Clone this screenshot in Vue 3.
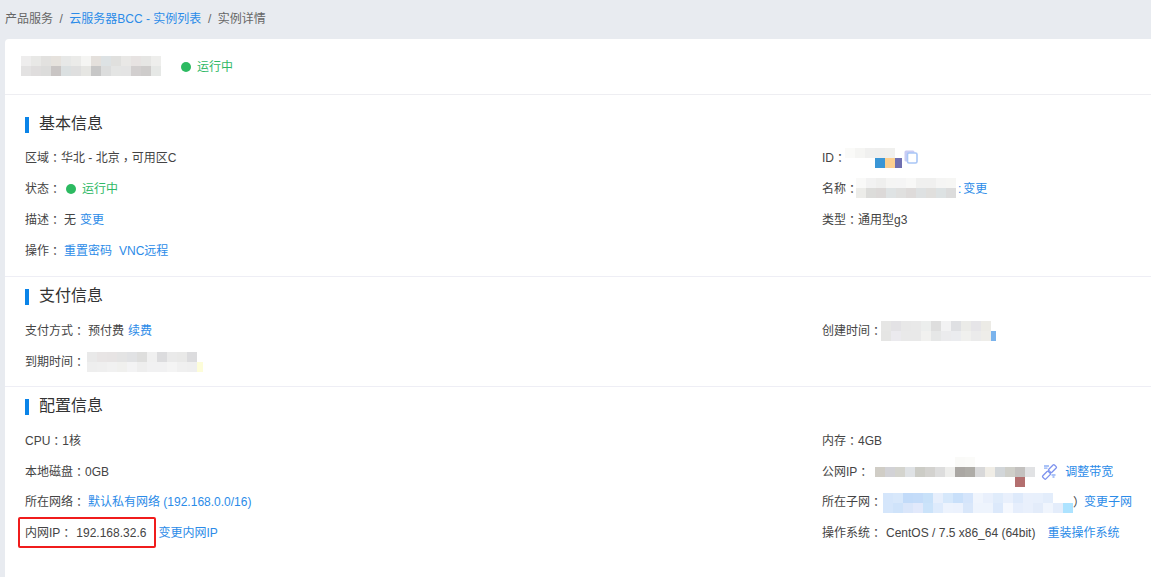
<script setup>
const hx = s => s.split(' ').map(c => {
  const [color, w] = c.split(':')
  return { background: '#' + color, width: (w || 10) + 'px' }
})

const blocks = {
  title: ['eeeded e8e8e6 e2e1df e6e2dd e7e8e7 ebebe9 f5f5f3 e4e0dc dde2e4 e0e0de e9e8e6 e7e3e2 e6e6e4 eeeeec',
          'e3e2e2 dfdddd dcdcdb c9c5c4 dbe0e1 dfdfdf e6e6e3 c7c7c7 dcdddd e4e5e4 e4e4e4 d2cfcf cecccb e6e8e6'],
  id: ['fafaf8 f5f5f3 f0f0ef efefee f0f0ee ffffff:7',
       'ffffff ffffff ffffff 3a96d6 fccf8f 6f6fb0:7'],
  name: ['f9f9f8 f2f2f2 efefee f5f5f4 f5f5f5 f8f8f7 f0f0ef f0f0ef f5f5f4 f6f6f4',
         'ecece9 dcdcda dcd9d8 dfe3e4 e0e0df dedbda dee1e2 e0dfdd dde2e3 dcdcdc'],
  created: ['e6e6e5 e3e2e5 e8e8e8 e9e9e9 eceeed dedede f2f2f3 dfe0e3 ebebe8 e6e5e8 ecebe6 ffffff:5',
            'e5e5e4 ebeaee e9e9e9 e9e9e9 f1f1ef e6e7e7 ebebed ebecef f0f0ee ebebeb eeede9 7ab3ec:5'],
  expire: ['e9e9e9 e8e5e5 e7e4e4 e4e4e4 e1e2e4 dededd f0f0f0 dcdcde eaeaea e9e9e8 dcdcde ffffff:6',
           'eeeeee efefef f1f1f1 f0f0ee f3f3f4 eeeeee f1f1f2 f1f1f2 f4f4f4 f0f0f0 efefef fdfdd9:6'],
  pub: ['ffffff ffffff ffffff ffffff ffffff ffffff ffffff ffffff fafaf8 fbfbf9 ffffff ffffff ffffff ffffff ffffff ffffff',
        'd0cdc6 d2d2d6 d4d4ce dfe2e5 ccccc6 d3d2cf dddddd eeeeec aaa7a3 aeaca7 d8d8d9 f0ede6 d2d6d9 cfcfc9 c3c1bf e1e2e4',
        'ffffff ffffff ffffff ffffff ffffff ffffff ffffff ffffff ffffff ffffff ffffff ffffff ffffff ffffff b36f6f ffffff'],
  subnet: ['d5e6fb d8e8fb c2dbf9 c4dcf9 c8e1f9 e7effc d6e8fb c9e0fa d5e5fb f0f5fd e9f0fc e0ecfb e9f0fc deeafb e9f0fc e8f0fc e3edfb ffffff ffffff',
           'd5e6fb cfe3fa dae6fa e2e9fb cbe3fa deebfc edf3fd ecf2fd d9e7fa eef4fd eef4fd dce9fb f5f8fe e6eefc e9f0fc e3ecfa f0f5fd e4edfb ade3ff']
}
const rowsOf = k => blocks[k].map(hx)

const sections = [
  {
    title: '基本信息', cls: 'sec-basic',
    rows: [
      [{ l: '区域', v: '华北 - 北京', gap: 0, tail: '可用区C' }, { l: 'ID', copy: true, b: 'id', bo: -1 }],
      [{ l: '状态', status: true }, { l: '名称', b: 'name', bo: -2, up: 2, faint: true, link: [{ t: '变更', cls: 'tight' }] }],
      [{ l: '描述', v: '无', gap: 3, link: [{ t: '变更' }] }, { l: '类型', v: '通用型g3', gap: 0 }],
      [{ l: '操作', gap: 3, link: [{ t: '重置密码', cls: 'near' }, { t: 'VNC远程' }] }, {}]
    ]
  },
  {
    title: '支付信息', cls: 'sec-pay',
    rows: [
      [{ l: '支付方式', v: '预付费', gap: 3, link: [{ t: '续费' }] }, { l: '创建时间', b: 'created', bo: -1 }],
      [{ l: '到期时间', b: 'expire', bo: 2 }, {}]
    ]
  },
  {
    title: '配置信息', cls: 'sec-config',
    rows: [
      [{ l: 'CPU', v: '1核', gap: 0 }, { l: '内存', v: '4GB', gap: 0 }],
      [{ l: '本地磁盘', v: '0GB', gap: 0 }, { l: '公网IP', b: 'pub', bo: 6, sat: true, satLink: '调整带宽' }],
      [{ l: '所在网络', gap: 3, link: [{ t: '默认私有网络 (192.168.0.0/16)', cls: 'near' }] }, { l: '所在子网', b: 'subnet', bo: 1, up: -2, paren: true, link: [{ t: '变更子网', cls: 'none' }] }],
      [{ l: '内网IP', v: '192.168.32.6', gap: 4, mark: true, link: [{ t: '变更内网IP', cls: 'far' }] }, { l: '操作系统', v: 'CentOS / 7.5 x86_64 (64bit)', gap: 4, link: [{ t: '重装操作系统', cls: 'far' }] }]
    ]
  }
]
</script>

<template>
  <div class="page">
    <nav class="crumbs">
      <span>产品服务</span><i>/</i>
      <a>云服务器BCC - 实例列表</a><i>/</i>
      <span>实例详情</span>
    </nav>

    <main class="card">
      <header class="head">
        <div class="mosaic">
          <div v-for="(r, i) in rowsOf('title')" :key="i" class="mrow">
            <b v-for="(c, j) in r" :key="j" :style="c"></b>
          </div>
        </div>
        <span class="status head-status"><em class="dot"></em>运行中</span>
      </header>

      <section v-for="s in sections" :key="s.title" class="sec" :class="s.cls">
        <h2 class="sec-title">{{ s.title }}</h2>
        <div v-for="(row, ri) in s.rows" :key="ri" class="row">
          <div v-for="(f, fi) in row" :key="fi" class="field" :class="{ right: fi === 1, marked: f.mark }">
            <template v-if="f.l">
              <span>{{ f.l }}</span><span class="colon">：</span>
              <span v-if="f.status" class="status"><em class="dot"></em>运行中</span>
              <div v-if="f.b" class="mosaic" :style="{ marginLeft: f.bo + 'px', marginBottom: (f.up || 0) + 'px' }">
                <div v-for="(r, i) in rowsOf(f.b)" :key="i" class="mrow">
                  <b v-for="(c, j) in r" :key="j" :style="c"></b>
                </div>
              </div>
              <svg v-if="f.copy" class="copy" width="14" height="14" viewBox="0 0 14 14">
                <rect x="0.5" y="0.5" width="10" height="11" rx="1.5" fill="#c9ccf4" />
                <rect x="3.5" y="3" width="9.5" height="10" rx="1.5" fill="#fff" stroke="#a9c6f6" stroke-width="1.6" />
              </svg>
              <span v-if="f.v" :style="{ marginLeft: f.gap + 'px' }">{{ f.v }}</span>
              <template v-if="f.tail"><span class="comma">，</span><span>{{ f.tail }}</span></template>
              <span v-if="f.faint" class="faint">:</span>
              <span v-if="f.paren" class="paren">）</span>
              <template v-if="f.sat">
                <svg class="sat" width="18" height="19" viewBox="0 0 18 19" fill="none" stroke="#7d92ee" stroke-width="1.3">
                  <rect x="7.5" y="4.4" width="8" height="4.4" rx="1" transform="rotate(-45 11.5 6.6)" />
                  <rect x="1.5" y="11" width="8" height="4.4" rx="1" transform="rotate(-45 5.5 13.2)" />
                  <path d="M8.8 9.2l-0.6 0.6M3 4h5M3 6.2h3.5M10.5 13h4M11.5 15h2" stroke="#8fb0f5" />
                </svg>
                <a class="sat-link">{{ f.satLink }}</a>
              </template>
              <a v-for="k in f.link" :key="k.t" class="link" :class="k.cls">{{ k.t }}</a>
              <span v-if="f.mark" class="redbox"></span>
            </template>
          </div>
        </div>
      </section>
    </main>
  </div>
</template>

<style>
html, body { margin: 0; background: #e8ebf0; }
</style>

<style scoped>
.page {
  height: 577px;
  overflow: hidden;
  background: #e8ebf0;
  color: #444;
  font: 12px/16px "Liberation Sans", "Noto Sans CJK SC", sans-serif;
}
.crumbs {
  height: 39px;
  box-sizing: border-box;
  padding: 11px 0 0 5px;
  display: flex;
  color: #666;
}
.crumbs i { font-style: normal; margin: 0 6.5px 0 6.5px; }
a { color: #2b8be8; cursor: pointer; }
.card {
  margin-left: 5px;
  height: 538px;
  background: #fff;
  border-radius: 4px 0 0 0;
}
.head {
  height: 56px;
  box-sizing: border-box;
  padding: 17px 0 0 16px;
  display: flex;
  align-items: flex-start;
  border-bottom: 1px solid #eeeef2;
}
.head-status { margin: 3px 0 0 20px; }
.status { display: inline-flex; align-items: center; color: #2fb866; }
.dot {
  width: 10px;
  height: 10px;
  border-radius: 50%;
  background: #2cba61;
  margin-right: 6px;
}
.field .status { margin-left: 5px; }
.sec { padding-left: 20px; border-bottom: 1px solid #eeeef5; box-sizing: border-box; }
.sec:last-child { border-bottom: 0; }
.sec-basic { height: 182px; padding-top: 22px; }
.sec-pay { height: 110px; padding-top: 12px; }
.sec-config { padding-top: 12px; }
.sec-title {
  margin: 0;
  height: 16px;
  font-size: 16px;
  line-height: 13px;
  font-weight: 400;
  color: #333;
  border-left: 4px solid #0a84e8;
  padding-left: 10px;
}
.sec-basic .sec-title { margin-bottom: 9px; }
.sec-pay .sec-title { margin-bottom: 10px; }
.sec-config .sec-title { margin-bottom: 10.6px; }
.row { display: flex; height: 31px; }
.sec-config .row { height: 30.67px; }
.field { width: 797px; display: flex; align-items: center; position: relative; white-space: nowrap; }
.field.right { width: auto; flex: 1; }
.colon { font-family: "Noto Sans CJK TC", sans-serif; width: 12px; }
.comma { font-family: "Noto Sans CJK TC", sans-serif; width: 12px; padding-top: 5px; }
.mosaic { display: flex; flex-direction: column; flex: none; }
.mrow { display: flex; height: 10px; }
.mrow b { display: block; height: 10px; flex: none; }
.copy { margin: 0 0 1px 2px; }
.link { margin-left: 4px; }
.link + .link { margin-left: 7px; }
.faint { color: #2b8be8; margin-left: 2px; }
.tight { margin-left: 2px; }
.none { margin-left: 0; }
.near { margin-left: 3px; }
.far { margin-left: 12px; }
.paren { width: 11px; color: #444; font-family: "Noto Sans CJK SC", sans-serif; }
.sat { margin: 0 0 0 6px; }
.sat-link { margin-left: 6px; }
.redbox {
  position: absolute;
  left: -7px;
  top: -0.6px;
  width: 134px;
  height: 27px;
  border: 2px solid #f01c1c;
  border-radius: 2px;
  pointer-events: none;
}
</style>
